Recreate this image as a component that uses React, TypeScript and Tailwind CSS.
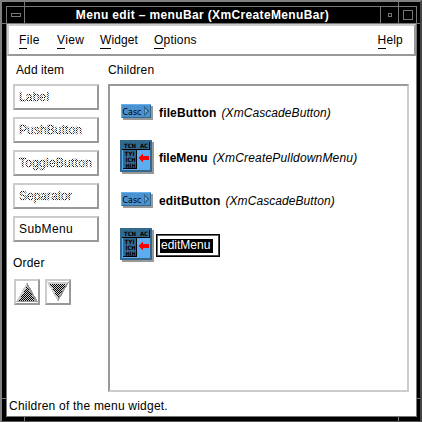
import React from 'react';

const bevelUp = 'border-2 border-t-[#cccccc] border-l-[#cccccc] border-r-[#999999] border-b-[#999999]';

function MenuItem({ label, className }: { label: string; className: string }) {
  return (
    <span className={`block h-[17px] whitespace-nowrap ${className}`}>
      <span className="inline-block h-[15px] border-b border-black leading-[13px]">{label[0]}</span>
      {label.slice(1)}
    </span>
  );
}

function AddButton({ label, disabled, spacing }: { label: string; disabled?: boolean; spacing: string }) {
  return (
    <button className={`relative flex h-[26px] w-[86px] items-center bg-white pl-[4px] text-left ${bevelUp}`}>
      <span className={`whitespace-nowrap leading-[14px] ${disabled ? '[-webkit-text-stroke:0.3px_black]' : ''} ${spacing}`}>{label}</span>
      {disabled && (
        <span className="absolute inset-0 bg-[repeating-conic-gradient(#ffffff_0_25%,transparent_0_50%)] bg-[length:2px_2px]" />
      )}
    </button>
  );
}

function Arrow({ down }: { down?: boolean }) {
  return (
    <button className={`h-[26px] w-[26px] bg-white ${bevelUp}`}>
      <svg width="22" height="22" viewBox="0 0 22 22" shapeRendering="crispEdges">
        <defs>
          <pattern id="dots" width="2" height="2" patternUnits="userSpaceOnUse">
            <rect width="2" height="2" fill="#cccccc" />
            <rect width="1" height="1" fill="#000" />
            <rect x="1" y="1" width="1" height="1" fill="#000" />
          </pattern>
        </defs>
        {down ? (
          <>
            <path d="M0 1H22L11 21Z" fill="#cccccc" />
            <path d="M22 1L11 21V17L19 3Z" fill="#999999" />
            <path d="M3 3H19L11 17Z" fill="url(#dots)" />
          </>
        ) : (
          <>
            <path d="M11 1L22 21H0Z" fill="#cccccc" />
            <path d="M11 1L22 21H0L2 20H19L11 5Z" fill="#999999" />
            <path d="M11 5L19 20H3Z" fill="url(#dots)" />
          </>
        )}
      </svg>
    </button>
  );
}

function CascadeIcon() {
  return (
    <svg className="ml-[1px]" width="33" height="17" viewBox="0 0 33 17" shapeRendering="crispEdges">
      <path d="M2 2H32V16H2Z" fill="#999999" />
      <path d="M0 0H30V14H0Z" fill="#62b0ee" />
      <path d="M1 1H30V14H1Z" fill="#33688f" />
      <path d="M1 1H29V13H1Z" fill="#4a92cf" />
      <text x="1.5" y="10.5" fontSize="9" textLength="19" lengthAdjust="spacingAndGlyphs" fill="#000" fontFamily="DejaVu Sans, sans-serif">Casc</text>
      <path d="M23.5 3V11L27.5 7Z" fill="#5badf0" stroke="#33688f" />
    </svg>
  );
}

function PulldownIcon() {
  return (
    <svg className="block shrink-0" width="35" height="35" viewBox="0 0 35 35" shapeRendering="crispEdges">
      <path d="M2 2H34V34H2Z" fill="#999999" />
      <path d="M0 0H32V32H0Z" fill="#33688f" />
      <path d="M2 2H30V30H2Z" fill="#5badf0" />
      <path d="M2 2H30V9H2Z" fill="#33688f" />
      <path d="M29 2H30V10H2V9H29Z M16 10H17V29H3V28H16Z" fill="#000" />
      <path d="M3 10H16V28H3Z" fill="#33688f" />
      <g fill="#000" fontSize="6" fontWeight="bold" fontFamily="DejaVu Sans, sans-serif">
        <text x="4" y="8" textLength="12" lengthAdjust="spacingAndGlyphs">TCN</text>
        <text x="20" y="8" textLength="8" lengthAdjust="spacingAndGlyphs">AC</text>
        <text x="4.5" y="15.5" textLength="10" lengthAdjust="spacingAndGlyphs">TYI</text>
        <text x="5.5" y="21.5" textLength="10" lengthAdjust="spacingAndGlyphs">ICH</text>
        <text x="5.5" y="27.5" textLength="10" lengthAdjust="spacingAndGlyphs">HIH</text>
      </g>
      <path d="M18 18L23 14V16H29V20H23V22Z" fill="#f00" />
    </svg>
  );
}

function Child({ name, type, menu, nameSpacing, typeSpacing, className }: { name: string; type: string; menu?: boolean; nameSpacing: string; typeSpacing: string; className: string }) {
  return (
    <div className={`flex items-center whitespace-nowrap ${className}`}>
      <span className="w-[39px] shrink-0">{menu ? <PulldownIcon /> : <CascadeIcon />}</span>
      <b className={`mr-[5px] ${nameSpacing}`}>{name}</b>
      <i className={typeSpacing}>{type}</i>
    </div>
  );
}

export default function App() {
  return (
    <div className="relative flex h-[422px] w-[422px] flex-col overflow-hidden border-t-2 border-r-2 border-b border-l-2 border-t-[#808080] border-r-[#444444] border-b-[#555555] border-l-[#808080] bg-black pt-[4px] pr-[3px] pb-[4px] pl-[4px] font-['Liberation_Sans',Arial,sans-serif] text-[12px] leading-[14px] text-black">
      {/* resize-handle notches of the window frame */}
      <span className="absolute top-0 left-[22px] h-[4px] w-px bg-[#777777]" />
      <span className="absolute top-0 left-[396px] h-[4px] w-px bg-[#777777]" />
      <span className="absolute bottom-0 left-[22px] h-[4px] w-px bg-[#777777]" />
      <span className="absolute bottom-0 left-[396px] h-[4px] w-px bg-[#777777]" />
      <span className="absolute top-[21px] left-0 h-px w-[4px] bg-[#777777]" />
      <span className="absolute top-[396px] left-0 h-px w-[4px] bg-[#777777]" />
      <span className="absolute top-[21px] right-0 h-px w-[3px] bg-[#777777]" />
      <span className="absolute top-[396px] right-0 h-px w-[3px] bg-[#777777]" />
      <header className="flex h-[18px] shrink-0 border border-[#777777] text-white">
        <div className="flex w-[18px] items-center justify-center border-r border-[#777777]">
          <span className="h-[4px] w-[10px] border border-[#777777]" />
        </div>
        <h1 className="flex-1 text-center text-[12px] leading-[17px] font-bold tracking-[0.36px] whitespace-nowrap">Menu edit – menuBar (XmCreateMenuBar)</h1>
        <div className="flex w-[18px] items-center justify-center border-l border-[#777777]">
          <span className="h-[4px] w-[4px] border border-[#777777]" />
        </div>
        <div className="flex w-[18px] items-center justify-center border-l border-[#777777]">
          <span className="h-[10px] w-[10px] border border-[#777777]" />
        </div>
      </header>
      <main className="flex flex-1 flex-col border-x border-b border-[#777777] bg-white">
        <nav className={`flex h-[32px] shrink-0 pt-[7px] ${bevelUp}`}>
          <MenuItem label="File" className="ml-[10px] w-[38px] tracking-[0.4px]" />
          <MenuItem label="View" className="w-[43px] tracking-[0.3px]" />
          <MenuItem label="Widget" className="w-[54px] tracking-[0.1px]" />
          <MenuItem label="Options" className="w-[60px] tracking-[0.2px]" />
          <MenuItem label="Help" className="mr-[11px] ml-auto tracking-[0.2px]" />
        </nav>
        <div className="flex h-[337px]">
          <aside className="ml-[6px] w-[95px] pt-[7px]">
            <h2 className="pl-[3px] tracking-[0.1px]">Add item</h2>
            <div className="mt-[7px] flex flex-col gap-[7px]">
              <AddButton label="Label" disabled spacing="tracking-[0.2px]" />
              <AddButton label="PushButton" disabled spacing="tracking-[0.1px]" />
              <AddButton label="ToggleButton" disabled spacing="tracking-[0.25px]" />
              <AddButton label="Separator" disabled spacing="" />
              <AddButton label="SubMenu" spacing="tracking-[0.4px]" />
            </div>
            <h2 className="mt-[14px] tracking-[0.2px]">Order</h2>
            <div className="mt-[9px] ml-[1px] flex gap-[5px]"><Arrow /><Arrow down /></div>
          </aside>
          <section className="pt-[7px]">
            <h2 className="tracking-[0.2px]">Children</h2>
            <div className="mt-[7px] h-[308px] w-[301px] border-2 border-t-[#999999] border-r-[#cccccc] border-b-[#cccccc] border-l-[#999999] pt-[18px] pl-[10px]">
              <Child name="fileButton" type="(XmCascadeButton)" className="h-[17px]" nameSpacing="tracking-[0.15px]" typeSpacing="tracking-[0.07px]" />
              <Child name="fileMenu" type="(XmCreatePulldownMenu)" menu className="mt-[19px] h-[35px]" nameSpacing="" typeSpacing="tracking-[0.18px]" />
              <Child name="editButton" type="(XmCascadeButton)" className="mt-[17px] h-[17px]" nameSpacing="tracking-[0.15px]" typeSpacing="tracking-[0.07px]" />
              <div className="mt-[19px] flex h-[35px] items-center">
                <PulldownIcon />
                <div className="ml-[1px] flex h-[23px] w-[64px] border border-black">
                  <div className="flex flex-1 items-center border border-t-[#666666] border-r-[#444444] border-b-[#444444] border-l-[#666666] pl-[2px]">
                    <span className="h-[14px] w-[53px] bg-black pl-[1px] leading-[13px] text-white">editMenu</span>
                  </div>
                </div>
              </div>
            </div>
          </section>
        </div>
        <footer className="mt-[6px] pl-[2px] tracking-[0.22px]">Children of the menu widget.</footer>
      </main>
    </div>
  );
}
